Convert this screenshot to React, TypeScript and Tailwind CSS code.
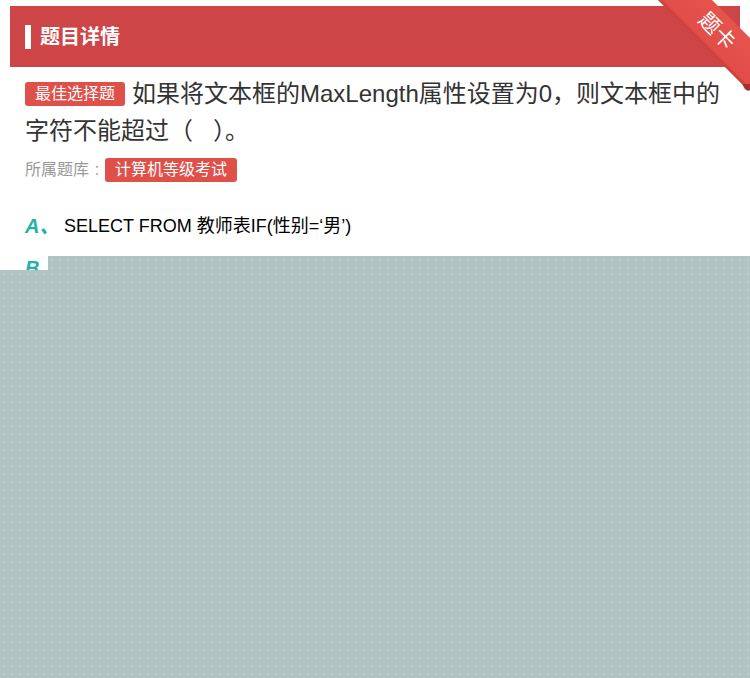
import React from "react";

const font = '"Liberation Sans","Noto Sans CJK SC",sans-serif';

function Ribbon() {
  return (
    <div className="absolute right-0 top-0 w-[92px] h-[92px]">
      <svg width="92" height="92" viewBox="0 0 92 92" className="absolute left-0 top-0">
        <defs>
          <linearGradient id="rb" x1="0" y1="1" x2="1" y2="0">
            <stop offset="0" stopColor="#d8443f" />
            <stop offset="1" stopColor="#ea5650" />
          </linearGradient>
        </defs>
        <path d="M84 84 L92 84 L92 90 Q90 92 87 89 Z" fill="#a8302c" />
        <polygon points="0,0 54,0 92,38 92,84 84,84" fill="url(#rb)" />
        <polygon points="0,0 4,0 88,84 84,84" fill="#c73c37" opacity="0.6" />
      </svg>
      <div
        className="absolute left-[34px] top-[19px] w-[50px] text-center text-white text-[21px] leading-[24px] rotate-45"
        style={{ fontFamily: font }}
      >
        题卡
      </div>
    </div>
  );
}

export default function App() {
  return (
    <div
      className="relative w-full h-[678px] overflow-hidden bg-white text-[#333]"
      style={{ fontFamily: font }}
    >
      <div className="mx-[10px] mt-[6px] h-[61px] bg-[#cd4546] flex items-center pl-[15px]">
        <div className="w-[6px] h-[24px] bg-white" />
        <div className="ml-[9px] text-white text-[20px] font-bold">题目详情</div>
      </div>
      <Ribbon />
      <div className="px-[25px]">
        <p className="mt-[8px] text-[24px] leading-[37px] text-[#333]">
          <span className="inline-block align-[3px] bg-[#e0504a] text-white text-[16px] leading-[24px] px-[10px] rounded-[3px] mr-[7px]">
            最佳选择题
          </span>
          如果将文本框的MaxLength属性设置为0，则文本框中的字符不能超过（&nbsp;&nbsp;&nbsp;）。
        </p>
        <div className="mt-[9px] flex items-center h-[24px] text-[16px]">
          <span className="text-[#999]">所属题库</span>
          <span className="text-[#999] w-[16px] text-center">:</span>
          <span className="bg-[#e0504a] text-white leading-[24px] px-[10px] rounded-[3px]">
            计算机等级考试
          </span>
        </div>
        <div className="mt-[29px] flex items-center h-[30px]">
          <span className="w-[39px] text-[#1eb3a6] text-[20px] font-bold italic">A、</span>
          <span className="text-[18px] text-black">SELECT FROM 教师表IF(性别=‘男’)</span>
        </div>
        <div className="mt-[12px] flex items-center h-[30px]">
          <span className="w-[39px] text-[#1eb3a6] text-[20px] font-bold italic">B、</span>
          <span className="text-[18px] text-black">SELECT FROM 教师表</span>
        </div>
      </div>
      <div className="absolute left-[48px] top-[256px] right-0 bottom-0 bg-[#b1c3c3] bg-[radial-gradient(circle,#bfcdcd_1px,transparent_1.5px)] bg-[length:8px_8px]" />
      <div className="absolute left-0 top-[270px] right-0 bottom-0 bg-[#b1c3c3] bg-[radial-gradient(circle,#bfcdcd_1px,transparent_1.5px)] bg-[length:8px_8px]" />
    </div>
  );
}
